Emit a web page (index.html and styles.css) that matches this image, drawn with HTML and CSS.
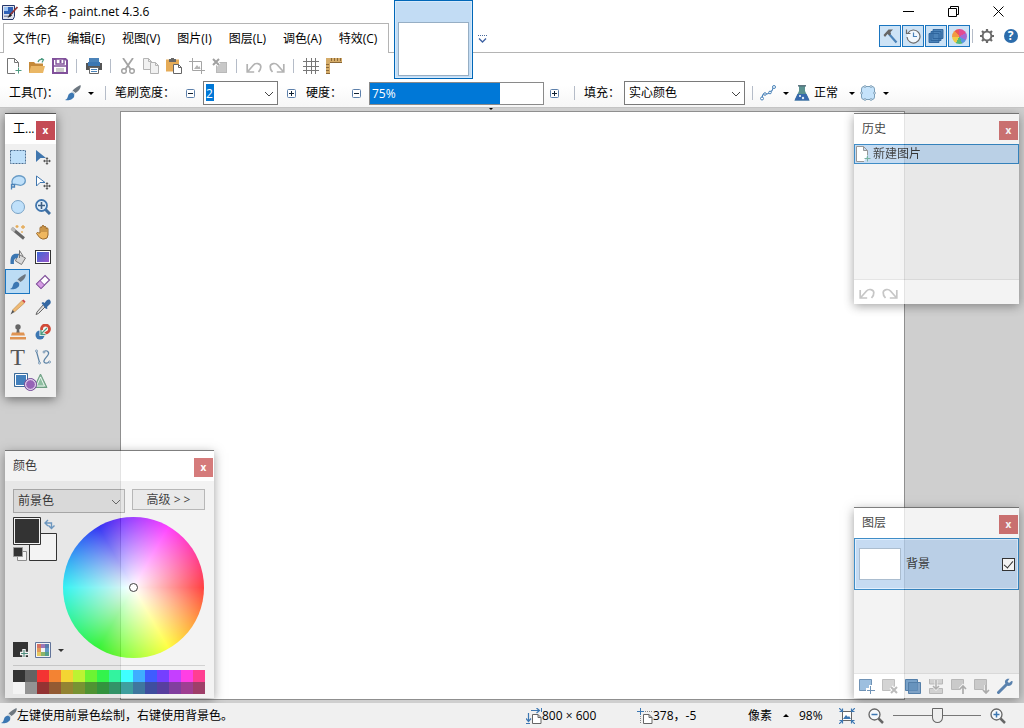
FILE: index.html
```html
<!DOCTYPE html>
<html lang="zh-CN">
<head>
  <meta charset="UTF-8">
  <title>未命名 - paint.net 4.3.6</title>
  <meta name="viewport" content="width=device-width, initial-scale=1.0">
  <link rel="stylesheet" href="styles.css">
</head>
<body>

<!-- Gemeinsame Symbole -->
<svg class="defs" width="0" height="0" aria-hidden="true">
  <symbol id="brush" viewBox="0 0 16 16">
    <path d="M15.500 0c.6 2.500-.6 5-5 8L7.500 5.500C10 3 13 1.200 15.500 0z" fill="#6d7780"/>
    <path d="M7.300 6l3 2.500-1.200 1.400-3-2.400z" fill="#c9d3da"/>
    <path d="M5.500 8c2.200-.6 4.300 1 3.700 3.200-.8 3-5 4.600-9.200 3.800 2.400-.9 2.500-2.300 3.100-4.200.4-1.400 1.200-2.400 2.400-2.800z" fill="#3c77b2"/>
  </symbol>
  <symbol id="newdoc" viewBox="0 0 16 16">
    <path d="M9 15.500H1.500V.5h7L12.500 4.500V9M8.500.5v4h4" fill="#fff" stroke="#747474"/>
    <path d="M12.500 9.500v6M9.500 12.500h6" stroke="#4f9c83" fill="none"/>
  </symbol>
  <symbol id="undo" viewBox="0 0 16 16">
    <path d="M1.200 6v8h7M2 13.200L7.500 7c2-2.300 7-2 7.300 1.500.2 2-.8 3.800-2.300 5.500" fill="none" stroke="#b3b3b3" stroke-width="1.700"/>
  </symbol>
  <symbol id="redo" viewBox="0 0 16 16">
    <path d="M14.800 6v8h-7M14 13.200L8.500 7c-2-2.300-7-2-7.300 1.500-.2 2 .8 3.800 2.300 5.500" fill="none" stroke="#b3b3b3" stroke-width="1.700"/>
  </symbol>
  <symbol id="chevron" viewBox="0 0 10 6">
    <path d="M1 1l4 4 4-4" fill="none" stroke="#444"/>
  </symbol>
  <symbol id="minus" viewBox="0 0 9 9">
    <rect x=".5" y=".5" width="8" height="8" rx="1" fill="#fff" stroke="#5d80ab"/>
    <path d="M2 4.500h5" stroke="#123"/>
  </symbol>
  <symbol id="plus" viewBox="0 0 9 9">
    <rect x=".5" y=".5" width="8" height="8" rx="1" fill="#fff" stroke="#5d80ab"/>
    <path d="M2 4.500h5M4.500 2v5" stroke="#123"/>
  </symbol>
  <symbol id="move" viewBox="0 0 8 8">
    <path d="M4 0l1.500 2h-1v1.500H6v-1L8 4 6 5.500v-1H4.500V6h1L4 8 2.500 6h1V4.500H2v1L0 4l2-1.500v1h1.500V2h-1z" fill="#555"/>
  </symbol>
</svg>

<header class="top">
  <div class="titlebar">
    <svg class="icon" viewBox="0 0 16 16">
      <path d="M.5 1.500h12v11l-1.500 3H.5z" fill="#dfe3ee" stroke="#26386b"/><path d="M2 3h9v7H2z" fill="#2f62b8"/><path d="M2 3h4v4H2z" fill="#9cc4f2"/><path d="M2 11.500h7v1.500H2z" fill="#8892b0"/>
      <path d="M15.500 3L8 11" stroke="#913535" stroke-width="1.800"/><path d="M8 9.500l2 2-4.500 2.500z" fill="#222"/>
    </svg>
    <span class="title">未命名 - paint.net 4.3.6</span>
    <button class="win" aria-label="最小化"><svg width="11" height="11" viewBox="0 0 11 11"><path d="M0 5.500h11" stroke="#000"/></svg></button>
    <button class="win" aria-label="还原"><svg width="11" height="11" viewBox="0 0 11 11"><path d="M.5 2.500h8v8h-8zM2.500 2.500v-2h8v8h-2" fill="none" stroke="#000"/></svg></button>
    <button class="win" aria-label="关闭"><svg width="11" height="11" viewBox="0 0 11 11"><path d="M.5.5l10 10M10.500.5l-10 10" stroke="#000"/></svg></button>
  </div>

  <div class="menurow">
    <nav class="menu">
      <button>文件(F)</button>
      <button>编辑(E)</button>
      <button>视图(V)</button>
      <button>图片(I)</button>
      <button>图层(L)</button>
      <button>调色(A)</button>
      <button>特效(C)</button>
    </nav>
    <div class="toggles">
      <button class="toggle" aria-label="工具"><svg class="icon" viewBox="0 0 16 16"><path d="M7 6l7.500 8.500" stroke="#4b83b9" stroke-width="2.200"/><path d="M1.500 7l5-5.500L11 1.500 8.500 4 9 6 7.500 7.500 5.500 6 3 9z" fill="#666"/></svg></button>
      <button class="toggle" aria-label="历史"><svg class="icon" viewBox="0 0 16 16"><circle cx="8.500" cy="8.500" r="6.500" fill="#f2f8fd"/><path d="M3 5A6.500 6.500 0 1 1 2 9M1.500 1.500v4h4" fill="none" stroke="#6c6c6c" stroke-width="1.200"/><path d="M8.500 4.500v4h3.500" fill="none" stroke="#4b83b9" stroke-width="1.200"/></svg></button>
      <button class="toggle" aria-label="图层"><svg class="icon" viewBox="0 0 16 16"><path d="M5 1.500h10v9H5zM3 3.500h10v9H3zM1 5.500h10v9H1z" fill="#4b83b9" stroke="#2d639b" stroke-width=".9"/></svg></button>
      <button class="toggle" aria-label="颜色"><span class="mini-wheel"></span></button>
      <i class="sep short"></i>
      <button class="tb" aria-label="设置"><svg class="icon" viewBox="0 0 16 16"><circle cx="8" cy="8" r="4.400" fill="none" stroke="#6a6a6a" stroke-width="2"/><path d="M8 1v2.500M8 12.500V15M1 8h2.500M12.500 8H15M3 3l2 2M11 11l2 2M3 13l2-2M11 5l2-2" stroke="#6a6a6a" stroke-width="2.200"/></svg></button>
      <button class="tb help" aria-label="帮助"><span>?</span></button>
    </div>
  </div>

  <div class="toolbar">
    <button class="tb" aria-label="新建"><svg class="icon"><use href="#newdoc"/></svg></button>
    <button class="tb" aria-label="打开"><svg class="icon" viewBox="0 0 16 16"><path d="M0 4h5l1.500 1.500H14V15H0z" fill="#c58a39"/><path d="M2 8h14L14 15H0z" fill="#eab765"/><path d="M9 4c1-3 3-3 5-2.500M12 0l2.500 1.700L13 4.500" fill="none" stroke="#4f9c83" stroke-width="1.200"/></svg></button>
    <button class="tb" aria-label="保存"><svg class="icon" viewBox="0 0 16 16"><path d="M1 1h12.500L15 2.500V15H1z" fill="#fff" stroke="#81519b" stroke-width="2"/><path d="M4 1h8v5H4zM1 8h14" fill="#fff" stroke="#81519b" stroke-width="1.400"/><path d="M8.500 2v3" stroke="#81519b" stroke-width="2"/><path d="M4 11h8M4 13h8" stroke="#999"/></svg></button>
    <i class="sep"></i>
    <button class="tb" aria-label="打印"><svg class="icon" viewBox="0 0 16 16"><path d="M3 0h10v5H3z" fill="#4b83b9"/><path d="M0 5h16v7H0z" fill="#555"/><path d="M2 4h12v4H2z" fill="#3c77b2"/><path d="M3.500 9.500h9v6h-9z" fill="#fff" stroke="#666"/><path d="M5 11.500h6M5 13.500h6" stroke="#4b83b9"/></svg></button>
    <i class="sep"></i>
    <button class="tb" aria-label="剪切"><svg class="icon" viewBox="0 0 16 16"><path d="M3 0l7.500 11M13 0L5.500 11" stroke="#a4a4a4" stroke-width="1.800"/><circle cx="4" cy="13" r="2.300" fill="none" stroke="#a4a4a4" stroke-width="1.500"/><circle cx="12" cy="13" r="2.300" fill="none" stroke="#a4a4a4" stroke-width="1.500"/></svg></button>
    <button class="tb" aria-label="复制"><svg class="icon" viewBox="0 0 16 16"><path d="M.5.5h5l3 3v8h-8z" fill="#f1f1f1" stroke="#b4b4b4"/><path d="M5.500.5v3h3" fill="none" stroke="#b4b4b4"/><path d="M7.500 4.500h5l3 3v8h-8z" fill="#f1f1f1" stroke="#b4b4b4"/><path d="M12.500 4.500v3h3" fill="none" stroke="#b4b4b4"/></svg></button>
    <button class="tb" aria-label="粘贴"><svg class="icon" viewBox="0 0 16 16"><path d="M0 1.500h13v12H0z" fill="#e5ab57"/><path d="M3 1h7v3H3z" fill="#666"/><path d="M5 0h3v2H5z" fill="#666"/><path d="M7.500 6.500h5l3 3v6h-8z" fill="#fff" stroke="#666"/><path d="M12.500 6.500v3h3" fill="none" stroke="#666"/></svg></button>
    <button class="tb" aria-label="裁剪"><svg class="icon" viewBox="0 0 16 16"><path d="M3.500 0v12.500H16M0 3.500h12.500V16" fill="none" stroke="#a4a4a4"/><path d="M5 11l3-4 1.500 2 1-1 1 3z" fill="#b4b4b4"/></svg></button>
    <button class="tb" aria-label="取消选择"><svg class="icon" viewBox="0 0 16 16"><path d="M4 4h11v11H4z" fill="#c8c8c8"/><path d="M4.500 4.500h10v10h-10z" fill="none" stroke="#aaa" stroke-dasharray="1 1"/><path d="M1 1l6 6M7 1L1 7" stroke="#fff" stroke-width="4"/><path d="M1 1l6 6M7 1L1 7" stroke="#a0a0a0" stroke-width="2"/></svg></button>
    <i class="sep"></i>
    <button class="tb" aria-label="撤销"><svg class="icon"><use href="#undo"/></svg></button>
    <button class="tb" aria-label="重做"><svg class="icon"><use href="#redo"/></svg></button>
    <i class="sep"></i>
    <button class="tb" aria-label="网格"><svg class="icon" viewBox="0 0 16 16"><path d="M3.500 0v16M8.500 0v16M12.500 0v16M0 3.500h16M0 8.500h16M0 12.500h16" stroke="#777"/></svg></button>
    <button class="tb" aria-label="标尺"><svg class="icon" viewBox="0 0 16 16"><path d="M0 0h16v4H4v12H0z" fill="#d5ac69"/><path d="M5.500 0v3M8.500 0v3M11.500 0v3M14.500 0v3M0 6.500h3M0 9.500h3M0 12.500h3M0 15.500h4M4 4.500h12" stroke="#8a6838"/></svg></button>
  </div>

  <div class="options">
    <span class="lbl tool-lbl">工具(T)：</span>
    <button class="split" aria-label="画笔"><svg class="icon"><use href="#brush"/></svg><i class="caret"></i></button>
    <i class="sep"></i>
    <label class="lbl width-lbl" for="bw">笔刷宽度：</label>
    <button class="step" aria-label="减小"><svg class="small"><use href="#minus"/></svg></button>
    <div class="combo width-combo">
      <input id="bw" type="text" value="2">
      <svg class="chev"><use href="#chevron"/></svg>
    </div>
    <button class="step" aria-label="增大"><svg class="small"><use href="#plus"/></svg></button>
    <label class="lbl hard-lbl" for="hard">硬度：</label>
    <button class="step" aria-label="减小"><svg class="small"><use href="#minus"/></svg></button>
    <div class="hardness">
      <input id="hard" type="range" min="0" max="100" value="75">
      <output for="hard">75%</output>
    </div>
    <button class="step" aria-label="增大"><svg class="small"><use href="#plus"/></svg></button>
    <i class="sep"></i>
    <label class="lbl fill-lbl" for="fill">填充：</label>
    <div class="combo fill-combo">
      <select id="fill"><option>实心颜色</option></select>
      <svg class="chev"><use href="#chevron"/></svg>
    </div>
    <i class="sep tail"></i>
    <button class="split" aria-label="曲线"><svg class="icon" viewBox="0 0 16 16"><path d="M2 13C3 5 7 11 9 8s3 0 4-5" fill="none" stroke="#4b83b9" stroke-width="1.200"/><g fill="#fff" stroke="#4b83b9"><circle cx="2" cy="13.500" r="1.500"/><circle cx="5" cy="9" r="1.300"/><circle cx="10" cy="7.500" r="1.300"/><circle cx="14" cy="2" r="1.500"/></g></svg><i class="caret"></i></button>
    <button class="split blend"><svg class="icon" viewBox="0 0 16 16"><path d="M5 1h6v5l4.500 9.500H.5L5 6z" fill="#5a9290"/><path d="M3.500 9h9l3 6.500H.5z" fill="#3669ad"/><path d="M4 .8h8" stroke="#57707c" stroke-width="1.500"/><circle cx="6" cy="11" r="1" fill="#fff"/><circle cx="9" cy="13" r="1.200" fill="#d9e8f7"/></svg><span>正常</span><i class="caret"></i></button>
    <button class="split" aria-label="选区"><svg class="icon" viewBox="0 0 16 16"><path d="M4 1.500h8q2.500 0 2.500 2.500v8q0 2.500-2.500 2.500H4Q1.500 14.500 1.500 12V4Q1.500 1.500 4 1.500z" fill="#c5e3fb" stroke="#7c9fb8"/><g fill="#fff" stroke="#6f95b2" stroke-width=".8"><circle cx="5" cy="1.500" r="1"/><circle cx="11" cy="1.500" r="1"/><circle cx="14.500" cy="8" r="1"/><circle cx="1.500" cy="8" r="1"/><circle cx="5" cy="14.500" r="1"/><circle cx="11" cy="14.500" r="1"/></g></svg><i class="caret"></i></button>
  </div>

  <!-- Bildliste liegt über Titel und Menü -->
  <div class="images">
    <button class="thumb" aria-label="未命名"><span></span></button>
    <button class="more" aria-label="图片列表"><svg width="9" height="9" viewBox="0 0 9 9"><path d="M0 .5h9" stroke="#4a6a9b" stroke-dasharray="1 1"/><path d="M1 3.500l3.500 3.500L8 3.500" fill="none" stroke="#3e62a3" stroke-width="1.300"/></svg></button>
  </div>
</header>

<main class="workspace">
  <i class="marker"></i>
  <div class="canvas"></div>

  <section class="panel tools">
    <div class="panel-head"><h2>工...</h2><button class="close" aria-label="关闭">x</button></div>
    <div class="tool-grid">
      <button aria-label="矩形选择"><svg class="icon" viewBox="0 0 16 16"><path d="M.5 1.500h15v13H.5z" fill="#bfe0fa" stroke="#4b6f92" stroke-dasharray="2 1"/></svg></button>
      <button aria-label="移动所选像素"><svg class="icon" viewBox="0 0 16 16"><path d="M1 1l10 8H5.500L1 13z" fill="#4076ae"/><use href="#move" x="8" y="8" width="8" height="8"/></svg></button>
      <button aria-label="套索选择"><svg class="icon" viewBox="0 0 16 16"><path d="M3 11C-.5 5 6 .8 11 2s6 7 1 9c-3 1.300-4-1-7-.5" fill="#bfe0fa" stroke="#6a9cc6" stroke-width="1.300"/><path d="M1.500 15.500V10.500h3v2.500h-3" fill="none" stroke="#4b83b9" stroke-width="1.300"/></svg></button>
      <button aria-label="移动选区"><svg class="icon" viewBox="0 0 16 16"><path d="M1.500 2l8.500 6.500H5L1.500 12z" fill="#fff" stroke="#4076ae"/><use href="#move" x="8" y="8" width="8" height="8"/></svg></button>
      <button aria-label="椭圆选择"><svg class="icon" viewBox="0 0 16 16"><circle cx="8" cy="8" r="6.500" fill="#bfe0fa" stroke="#7aa3c6"/></svg></button>
      <button aria-label="缩放"><svg class="icon" viewBox="0 0 16 16"><path d="M10 10l5 5" stroke="#3f6e9f" stroke-width="3"/><circle cx="6.500" cy="6.500" r="5.500" fill="#e3f0fb" stroke="#4076ae" stroke-width="1.800"/><path d="M6.500 3v7M3 6.500h7" stroke="#3f5f82" stroke-width="1.600"/></svg></button>
      <button aria-label="魔术棒"><svg class="icon" viewBox="0 0 16 16"><path d="M2 4.500l12 10" stroke="#666" stroke-width="3"/><path d="M1.500 4l3.500 3" stroke="#bbb" stroke-width="3"/><path d="M7 1v3M5.500 2.500h3M13 1v4M11 3h4M12 7v2" stroke="#e5ab57" stroke-width="1.300"/></svg></button>
      <button aria-label="平移"><svg class="icon" viewBox="0 0 16 16"><path d="M5 9V3.500q1-1.200 2 0V2q1-1.200 2 0v1q1-1.200 2 0v1.500q1.200-1 2 0V11q0 4-4 4H7.500Q5 15 1.500 9.500q.5-1.700 2-.7z" fill="#efb75f" stroke="#98682c"/><path d="M7 3.500V8M9 3v5M11 4v4" stroke="#98682c" stroke-width=".8"/></svg></button>
      <button aria-label="油漆桶"><svg class="icon" viewBox="0 0 16 16"><path d="M8 5l7.500 4-4 6.500-6-3.500z" fill="#d8d8d8" stroke="#777"/><path d="M9.500 9V1.500L13 7" fill="none" stroke="#777"/><path d="M9 5C4 4 0 5 .5 15H4c-.5-4 .5-6 3.500-6z" fill="#3c77b2"/></svg></button>
      <button aria-label="渐变"><span class="gradient-box"></span></button>
      <button class="active" aria-label="画笔"><svg class="icon"><use href="#brush"/></svg></button>
      <button aria-label="橡皮擦"><svg class="icon" viewBox="0 0 16 16"><path d="M10 1.500L14.500 6 6 14.500 1.500 10z" fill="#fff" stroke="#81519b" stroke-width="1.200"/><path d="M5 6.500L9.500 11 6 14.500 1.500 10z" fill="#d69be4" stroke="#81519b"/></svg></button>
      <button aria-label="铅笔"><svg class="icon" viewBox="0 0 16 16"><path d="M12 1.500l2.500 2.500L4.500 13 2.500 11z" fill="#efb973" stroke="#a87b40" stroke-width=".5"/><path d="M12 1.500L13.500.5 15.500 2.500 14.500 4z" fill="#d04545"/><path d="M2.500 11l2 2L.5 15.500z" fill="#555"/></svg></button>
      <button aria-label="取色器"><svg class="icon" viewBox="0 0 16 16"><path d="M8.500 5.500l2 2-7 7-2.500 1 1-2.500z" fill="#ddd" stroke="#666"/><path d="M6.500 4L8 3l1.500 1 2-2.500q3-2 4 .5t-1.500 4L12 8l.5 1.500L11 10z" fill="#3568a2"/></svg></button>
      <button aria-label="图章"><svg class="icon" viewBox="0 0 16 16"><circle cx="8" cy="3" r="2.700" fill="#666"/><path d="M7 5h2l.7 4H6.300z" fill="#666"/><path d="M2 8.500h12l1 3H1zM0 13h16v2.500H0z" fill="#df9352"/></svg></button>
      <button aria-label="重新着色"><svg class="icon" viewBox="0 0 16 16"><circle cx="10.500" cy="5" r="4" fill="none" stroke="#d04a37" stroke-width="2.800"/><circle cx="5" cy="11" r="4.500" fill="#3c77b2"/><path d="M12 4L6 10M6 6v4.500h4.500" fill="none" stroke="#fff" stroke-width="3"/><path d="M12 4L6 10M6 6v4.500h4.500" fill="none" stroke="#4f9c83" stroke-width="1.400"/></svg></button>
      <button class="text-tool" aria-label="文本">T</button>
      <button aria-label="直线或曲线"><svg class="icon" viewBox="0 0 16 16"><path d="M1.500 2.500l3 11M9 3c2-3 6 0 4 3s-5 5-4 7 4 1 5 0" fill="none" stroke="#5b82a5" stroke-width="1.200"/><g fill="#fff" stroke="#5b82a5" stroke-width=".8"><circle cx="1.500" cy="2" r="1"/><circle cx="4.500" cy="14" r="1"/><circle cx="9" cy="3" r="1"/><circle cx="14.500" cy="13" r="1"/></g></svg></button>
      <button class="shapes" aria-label="形状"><svg width="35" height="18" viewBox="0 0 35 18"><path d="M1.500.5h13v13h-13z" fill="#4380bc" stroke="#3b6a98"/><path d="M2.500 1.500h11v11h-11z" fill="none" stroke="#fff"/><path d="M27.500 1l6.500 13.500h-13z" fill="#8ebfa1" stroke="#6c9c81"/><path d="M27.500 4l4 9h-8z" fill="none" stroke="#fff" stroke-width=".8"/><circle cx="17.500" cy="11.500" r="6" fill="#9663b6" stroke="#76509a"/><circle cx="17.500" cy="11.500" r="4.900" fill="none" stroke="#fff" stroke-width=".9"/></svg></button>
    </div>
  </section>

  <section class="panel history faded">
    <div class="panel-head"><h2>历史</h2><button class="close" aria-label="关闭">x</button></div>
    <button class="history-item"><svg class="icon"><use href="#newdoc"/></svg>新建图片</button>
    <div class="panel-foot">
      <button class="tb" aria-label="撤销"><svg class="icon"><use href="#undo"/></svg></button>
      <button class="tb" aria-label="重做"><svg class="icon"><use href="#redo"/></svg></button>
    </div>
  </section>

  <section class="panel colors faded">
    <div class="panel-head"><h2>颜色</h2><button class="close" aria-label="关闭">x</button></div>
    <div class="color-top">
      <div class="combo color-combo">
        <select aria-label="颜色"><option>前景色</option></select>
        <svg class="chev"><use href="#chevron"/></svg>
      </div>
      <button class="advanced">高级 &gt; &gt;</button>
    </div>
    <div class="color-main">
      <div class="color-side">
        <svg width="46" height="46" viewBox="0 0 46 46">
          <path d="M16.500 16.500h27v27h-27z" fill="#fff" stroke="#000"/>
          <path d="M.5.5h27v27H.5z" fill="#fff" stroke="#000"/><path d="M2 2h24v24H2z" fill="#000"/>
          <path d="M4.500 34.500h9v9h-9z" fill="#fff" stroke="#777"/><path d="M.5 30.500h9v9h-9z" fill="#000" stroke="#888"/>
          <path d="M32.500 6h6v5M35 3l-3 3 3 3M35.500 8.500l3 3 3-3" fill="none" stroke="#4b83b9" stroke-width="1.400"/>
        </svg>
        <div class="swatch-tools">
          <button aria-label="添加颜色"><svg class="icon" viewBox="0 0 16 16"><path d="M0 0h15v15H0z" fill="#000"/><path d="M11 7v9M7 11.500h9" stroke="#fff" stroke-width="3.500"/><path d="M11 8v7M8 11.500h7" stroke="#2b7a68" stroke-width="1.200"/></svg></button>
          <button aria-label="调色板"><svg class="icon" viewBox="0 0 16 16"><path d="M.5.5h15v15H.5z" fill="#fff" stroke="#3e5689"/><path d="M2 2h4v4H2z" fill="#d9533e"/><path d="M6 2h4v4H6z" fill="#8e5aaf"/><path d="M10 2h4v4h-4z" fill="#345f9e"/><path d="M2 6h4v4H2z" fill="#e88734"/><path d="M10 6h4v4h-4z" fill="#3f85c4"/><path d="M2 10h4v4H2z" fill="#ecc33c"/><path d="M6 10h4v4H6z" fill="#76ad48"/><path d="M10 10h4v4h-4z" fill="#2c8f78"/></svg><i class="caret"></i></button>
        </div>
      </div>
      <div class="wheel"><i></i></div>
    </div>
    <div class="palette" id="palette"></div>
  </section>

  <section class="panel layers faded">
    <div class="panel-head"><h2>图层</h2><button class="close" aria-label="关闭">x</button></div>
    <label class="layer"><span class="layer-thumb"></span><span class="layer-name">背景</span><input type="checkbox" checked></label>
    <div class="panel-foot">
      <button class="tb" aria-label="新建图层"><svg class="icon" viewBox="0 0 16 16"><path d="M.5 1.500h12v11H.5z" fill="#7daad5" stroke="#416f9e"/><path d="M11.500 7v9M7 11.500h9" stroke="#fff" stroke-width="3"/><path d="M11.500 8v8M8 12.500h8" stroke="#416f9e"/></svg></button>
      <button class="tb" aria-label="删除图层"><svg class="icon" viewBox="0 0 16 16"><path d="M.5 1.500h12v11H.5z" fill="#c6c6c6" stroke="#aaa"/><path d="M9 9l6 6M15 9l-6 6" stroke="#fff" stroke-width="4"/><path d="M9 9l6 6M15 9l-6 6" stroke="#a5a5a5" stroke-width="2"/></svg></button>
      <button class="tb" aria-label="复制图层"><svg class="icon" viewBox="0 0 16 16"><path d="M.5 1.500h12v11H.5z" fill="#5d94c8" stroke="#2c659d"/><path d="M3.500 4.500h12v11h-12z" fill="#4079b3" fill-opacity=".8" stroke="#2c659d"/></svg></button>
      <button class="tb" aria-label="合并图层"><svg class="icon" viewBox="0 0 16 16"><path d="M1.500 1v5h13V1M1.500 15.500v-5h13v5z" fill="#d2d2d2" stroke="#b0b0b0"/><path d="M8 2v9M5 8l3 3 3-3" fill="none" stroke="#fff" stroke-width="3"/><path d="M8 2v9M5 8l3 3 3-3" fill="none" stroke="#a5a5a5" stroke-width="1.500"/></svg></button>
      <button class="tb" aria-label="上移图层"><svg class="icon" viewBox="0 0 16 16"><path d="M.5 1.500h12v10H.5z" fill="#c9c9c9" stroke="#b0b0b0"/><path d="M12 16V8M9 11l3-3 3 3" fill="none" stroke="#fff" stroke-width="3.500"/><path d="M12 16V8M9 11l3-3 3 3" fill="none" stroke="#a0a0a0" stroke-width="1.700"/></svg></button>
      <button class="tb" aria-label="下移图层"><svg class="icon" viewBox="0 0 16 16"><path d="M.5 1.500h12v10H.5z" fill="#c9c9c9" stroke="#b0b0b0"/><path d="M12 7v8M9 12l3 3 3-3" fill="none" stroke="#fff" stroke-width="3.500"/><path d="M12 7v8M9 12l3 3 3-3" fill="none" stroke="#a0a0a0" stroke-width="1.700"/></svg></button>
      <button class="tb" aria-label="图层属性"><svg class="icon" viewBox="0 0 16 16"><path d="M1.500 14.500L10 6" stroke="#3469a3" stroke-width="3" stroke-linecap="round"/><path d="M14.500 3L12 5l-1.500-1.500L12.500.8C9 0 7 3 8.500 5.500L10 7.500c3 1.500 6-1 5.500-4.500z" fill="#3469a3"/></svg></button>
    </div>
  </section>
</main>

<footer class="status">
  <svg class="icon"><use href="#brush"/></svg>
  <span class="hint">左键使用前景色绘制，右键使用背景色。</span>
  <span class="size"><svg class="icon" viewBox="0 0 16 16"><path d="M5 2.500h8M10.500 0l3 2.500-3 2.500M2.500 5v8M0 10.500l2.500 3 2.500-3" fill="none" stroke="#3c77b2" stroke-width="1.200"/><path d="M15.500 0v4M0 15.500h4" stroke="#3c77b2"/><path d="M6.500 6.500h5.500l3 3v6H6.500zM12 6.500v3h3" fill="#fff" stroke="#666"/></svg>800 × 600</span>
  <span class="cursor"><svg class="icon" viewBox="0 0 16 16"><path d="M3.500 0v7M0 3.500h7" stroke="#3c77b2"/><path d="M8 3.500h8M3.500 8v8" stroke="#888" stroke-dasharray="1 1"/><path d="M6.500 6.500h5.500l3 3v6H6.500zM12 6.500v3h3" fill="#fff" stroke="#666"/></svg>378，-5</span>
  <button class="units">像素<i class="caret up"></i></button>
  <button class="percent">98%</button>
  <button class="zoom-btn" aria-label="适合窗口"><svg class="icon" viewBox="0 0 16 16"><path d="M3.500 3.500h9v9h-9z" fill="#fff" stroke="#666"/><path d="M4 11l3-4 2 2 1-1 2 3z" fill="#3c77b2"/><path d="M0 0l4 4M16 0l-4 4M0 16l4-4M16 16l-4-4M.5 3.500h3v-3M12.500.5v3h3M.5 12.500h3v3M12.500 15.500v-3h3" fill="none" stroke="#3c77b2" stroke-width="1.200"/></svg></button>
  <button class="zoom-btn" aria-label="缩小"><svg class="icon" viewBox="0 0 16 16"><path d="M10.500 10.500l4.500 4.500" stroke="#666" stroke-width="2.500"/><circle cx="6.500" cy="6.500" r="5.500" fill="#f6f9fc" stroke="#666" stroke-width="1.300"/><path d="M3.500 6.500h6" stroke="#3c77b2" stroke-width="1.500"/></svg></button>
  <input class="zoom" type="range" min="0" max="100" value="50" aria-label="缩放">
  <button class="zoom-btn" aria-label="放大"><svg class="icon" viewBox="0 0 16 16"><path d="M10.500 10.500l4.500 4.500" stroke="#666" stroke-width="2.500"/><circle cx="6.500" cy="6.500" r="5.500" fill="#f6f9fc" stroke="#666" stroke-width="1.300"/><path d="M3.500 6.500h6M6.500 3.500v6" stroke="#3c77b2" stroke-width="1.500"/></svg></button>
</footer>

<script>
  const colors = [
    '#000000', '#404040', '#ff0000', '#ff6a00', '#ffd800', '#b6ff00', '#4cff00', '#00ff21',
    '#00ff90', '#00ffff', '#0094ff', '#0026ff', '#4800ff', '#b200ff', '#ff00dc', '#ff006e',
    '#ffffff', '#808080', '#7f0000', '#7f3300', '#7f6a00', '#5b7f00', '#267f00', '#007f0e',
    '#007f46', '#007f7f', '#004a7f', '#00137f', '#21007f', '#57007f', '#7f006e', '#7f0037'
  ];
  const palette = document.getElementById('palette');
  colors.forEach((color) => {
    const button = document.createElement('button');
    button.style.background = color;
    button.setAttribute('aria-label', color);
    palette.appendChild(button);
  });
</script>

</body>
</html>
```

FILE: styles.css
```css
* {
  box-sizing: border-box;
}

body {
  margin: 0;
  height: 100vh;
  display: flex;
  flex-direction: column;
  overflow: hidden;
  font-family: "Open Sans", "Noto Sans CJK SC", sans-serif;
  font-size: 12px;
  line-height: 16px;
  color: #000;
}

button {
  margin: 0;
  padding: 0;
  border: none;
  background: none;
  font: inherit;
  color: inherit;
  display: flex;
  align-items: center;
  justify-content: center;
  flex-shrink: 0;
}

svg {
  display: block;
  flex-shrink: 0;
}

.defs {
  position: absolute;
}

.icon {
  width: 16px;
  height: 16px;
}

.small {
  width: 9px;
  height: 9px;
}

/* Kopfbereich */
.top {
  position: relative;
  background: linear-gradient(#fff 80%, #f6f6f6);
  border-bottom: 1px solid #c4c4c4;
}

.titlebar {
  height: 23px;
  display: flex;
  align-items: center;
  padding: 0 3px 0 2px;
}

.title {
  flex: 1;
  margin-left: 5px;
}

.win {
  width: 45px;
  height: 20px;
}

.menurow {
  height: 30px;
  display: flex;
  justify-content: space-between;
  border-bottom: 1px solid #b4b4b4;
  padding-left: 3px;
}

.menu {
  display: flex;
  gap: 1px;
  height: 30px;
  padding: 0 3px 0 1px;
  background: #fff;
  border: 1px solid #b4b4b4;
  border-bottom: none;
}

.menu button {
  padding: 0 8px;
}

.toggles {
  display: flex;
  gap: 1px;
  height: 26px;
  align-items: center;
  padding-right: 2px;
}

.toggle {
  width: 22px;
  height: 22px;
  background: #cde3f6;
  border: 1px solid #1a75c0;
}

.mini-wheel {
  width: 15px;
  height: 15px;
  border-radius: 50%;
  background: conic-gradient(#e24b93 0 60deg, #a66ad2 60deg 120deg, #5a97e2 120deg 160deg, #56b978 160deg 210deg, #f0cb47 210deg 270deg, #f29a43 270deg 320deg, #ec5656 320deg);
}

.help span {
  width: 14px;
  height: 14px;
  border-radius: 50%;
  background: #2c6cab;
  color: #fff;
  font-weight: bold;
  line-height: 14px;
}

.toolbar {
  height: 26px;
  display: flex;
  align-items: center;
  padding-left: 2px;
}

.tb {
  width: 23px;
  height: 23px;
}

.sep {
  width: 1px;
  height: 14px;
  margin: 0 5px;
  background: #b5bcc8;
  flex-shrink: 0;
}

.sep.short {
  margin: 0 1px;
}

.options {
  height: 28px;
  display: flex;
  align-items: center;
  padding-left: 9px;
}

.lbl {
  white-space: nowrap;
}

.tool-lbl {
  width: 56px;
}

.width-lbl {
  width: 62px;
}

.options .sep {
  margin: 0 9px 0 10px;
}

.split {
  gap: 6px;
}

.split + .split {
  margin-left: 4px;
}

.blend span {
  margin: 0 4px 0 -2px;
}

.caret {
  border: 3px solid transparent;
  border-top-color: #000;
  border-bottom: none;
  margin: 0 1px;
}

.caret.up {
  border: 3px solid transparent;
  border-bottom-color: #000;
  border-top: none;
}

.step {
  width: 26px;
  height: 20px;
}

.combo {
  position: relative;
  height: 24px;
  border: 1px solid #7a7a7a;
  background: #fff;
  flex-shrink: 0;
}

.combo input,
.combo select {
  width: 100%;
  height: 100%;
  margin: 0;
  padding: 0 4px;
  border: none;
  outline: none;
  background: none;
  font: inherit;
  color: inherit;
  appearance: none;
}

.combo .chev {
  position: absolute;
  right: 3px;
  top: 9px;
  width: 10px;
  height: 6px;
  pointer-events: none;
}

.width-combo {
  width: 75px;
}

/* markierter Wert */
.width-combo input {
  padding: 0 2px;
  color: #fff;
  background: linear-gradient(#0078d7, #0078d7) 2px 2px / 8px 17px no-repeat;
}

.hard-lbl {
  margin-left: 2px;
  width: 37px;
}

.hardness {
  position: relative;
  width: 175px;
  height: 23px;
}

.hardness input {
  width: 100%;
  height: 100%;
  margin: 0;
  display: block;
  appearance: none;
  border: 1px solid #8a8a8a;
  background: linear-gradient(to right, #0078d7 75%, #fff 75%);
}

.hardness input::-webkit-slider-thumb {
  appearance: none;
  width: 1px;
  height: 1px;
}

.hardness output {
  position: absolute;
  left: 3px;
  top: 4px;
  color: #fff;
  pointer-events: none;
}

.hardness + .step {
  width: 20px;
}

.fill-lbl {
  width: 40px;
}

.fill-combo {
  width: 121px;
}

.options .sep.tail {
  margin: 0 7px;
}

/* Bildliste */
.images {
  position: absolute;
  left: 394px;
  top: 0;
  display: flex;
  align-items: center;
  gap: 5px;
}

.thumb {
  width: 79px;
  height: 79px;
  padding: 21px 3px 2px;
  background: #c2dcf4;
  border: 1px solid #0067b8;
  box-shadow: inset 0 0 0 1px #d5e9fb;
}

.thumb span {
  width: 100%;
  height: 100%;
  background: #fff;
  border: 1px solid #96aec4;
}

/* Arbeitsfläche */
.workspace {
  position: relative;
  flex: 1;
  min-height: 0;
  background: #cfcfcf;
  overflow: hidden;
}

.marker {
  position: absolute;
  left: 489px;
  top: 0;
  border: 2px solid transparent;
  border-top: 2px solid #000;
  border-bottom: none;
}

.canvas {
  width: 785px;
  height: 589px;
  margin: 3px auto 0;
  background: #fff;
  border: 1px solid #8f8f8f;
}

.panel {
  position: absolute;
  display: flex;
  flex-direction: column;
  background: #f0f0f0;
  box-shadow: 0 -1px 0 #555, 0 2px 10px rgba(0, 0, 0, 0.5);
}

.faded {
  opacity: 0.75;
}

.panel-head {
  height: 30px;
  flex-shrink: 0;
  background: #fff;
  display: flex;
  justify-content: space-between;
  padding: 7px 1px 0 8px;
}

.panel-head h2 {
  margin: 0;
  font-size: 12px;
  font-weight: normal;
}

.close {
  width: 19px;
  height: 19px;
  background: #c75050;
  color: #fff;
  font-weight: bold;
  font-size: 10px;
  line-height: 12px;
  padding-bottom: 1px;
}

.tools {
  left: 5px;
  top: 6px;
  width: 51px;
}

.tools .close {
  background: #c44b55;
}

.tool-grid {
  display: grid;
  grid-template-columns: 25px 25px;
  grid-auto-rows: 25px;
  padding-bottom: 3px;
}

.tool-grid button {
  width: 25px;
  height: 25px;
}

.tool-grid .active {
  background: #bcdcf4;
  border: 1px solid #1a75c0;
}

.gradient-box {
  width: 16px;
  height: 14px;
  border: 1px solid #333;
  box-shadow: inset 0 0 0 1px #fff;
  background: linear-gradient(135deg, #3568d8, #a255c8);
}

.tool-grid .text-tool {
  font-family: "Liberation Serif", serif;
  font-size: 24px;
  line-height: 24px;
  color: #555;
}

.tool-grid .shapes {
  grid-column: 1 / 3;
  width: 50px;
}

.panel-foot {
  margin-top: auto;
  height: 25px;
  flex-shrink: 0;
  background: #fff;
  display: flex;
  align-items: center;
  padding: 0 1px;
  border-top: 1px solid #ddd;
}

.history {
  right: 5px;
  top: 6px;
  width: 165px;
  height: 190px;
}

.history-item {
  height: 20px;
  justify-content: flex-start;
  gap: 2px;
  background: #b3d0ee;
  border: 1px solid #0067b5;
}

.layers {
  right: 5px;
  bottom: 5px;
  width: 165px;
  height: 190px;
}

.layer {
  height: 52px;
  display: flex;
  align-items: center;
  padding: 0 3px 0 4px;
  background: #b3d0ee;
  border: 1px solid #0067b5;
  box-shadow: inset 0 0 0 1px #d9ecff;
}

.layer-thumb {
  width: 42px;
  height: 32px;
  background: #fff;
  border: 1px solid #8fa8c0;
}

.layer-name {
  flex: 1;
  margin-left: 5px;
}

.layer input {
  appearance: none;
  margin: 0;
  width: 13px;
  height: 13px;
  background: #fff;
  border: 1px solid #000;
  display: flex;
  justify-content: center;
}

.layer input:checked::after {
  content: "";
  width: 4px;
  height: 8px;
  border: solid #000;
  border-width: 0 1px 1px 0;
  transform: rotate(40deg);
}

/* Farbfenster */
.colors {
  left: 5px;
  bottom: 5px;
  width: 209px;
  height: 247px;
}

.color-top {
  display: flex;
  justify-content: space-between;
  align-items: flex-start;
  padding: 8px 9px 0 8px;
}

.color-combo {
  width: 112px;
  background: #ddd;
  border-color: #999;
}

.advanced {
  width: 73px;
  height: 21px;
  background: #e4e4e4;
  border: 1px solid #a0a0a0;
}

.color-main {
  display: flex;
  justify-content: space-between;
  padding: 4px 10px 0 8px;
}

.color-side {
  width: 46px;
  display: flex;
  flex-direction: column;
  justify-content: space-between;
}

.swatch-tools {
  display: flex;
  gap: 6px;
}

.swatch-tools button {
  gap: 6px;
}

.wheel {
  width: 141px;
  height: 141px;
  flex-shrink: 0;
  border-radius: 50%;
  display: flex;
  align-items: center;
  justify-content: center;
  background: radial-gradient(closest-side, #fff, rgba(255, 255, 255, 0)), conic-gradient(from 90deg, #f00, #ff0, #0f0, #0ff, #00f, #f0f, #f00);
}

.wheel i {
  width: 9px;
  height: 9px;
  border: 1px solid #000;
  border-radius: 50%;
  background: #fff;
}

.palette {
  margin: 7px 9px 0 8px;
  padding-top: 4px;
  border-top: 1px solid #c4c4c4;
  display: grid;
  grid-template-columns: repeat(16, 1fr);
}

.palette button {
  height: 12px;
}

/* Statusleiste */
.status {
  height: 25px;
  flex-shrink: 0;
  display: flex;
  align-items: center;
  background: #f0f0f0;
  padding: 0 12px 0 1px;
}

.hint {
  flex: 1;
  white-space: nowrap;
}

.size,
.cursor {
  display: flex;
  align-items: center;
  white-space: nowrap;
  width: 111px;
}

.units {
  width: 51px;
  gap: 10px;
  justify-content: flex-start;
}

.percent {
  width: 33px;
  justify-content: flex-start;
}

.zoom-btn {
  width: 29px;
}

.zoom {
  width: 88px;
  height: 20px;
  margin: 0 3px;
  appearance: none;
  background: linear-gradient(#777, #777) center / 100% 1px no-repeat;
}

.zoom + .zoom-btn {
  width: 28px;
}

.zoom::-webkit-slider-thumb {
  appearance: none;
  width: 11px;
  height: 15px;
  border: 1px solid #666;
  border-radius: 1px 1px 6px 6px;
  background: #eee;
}
```
